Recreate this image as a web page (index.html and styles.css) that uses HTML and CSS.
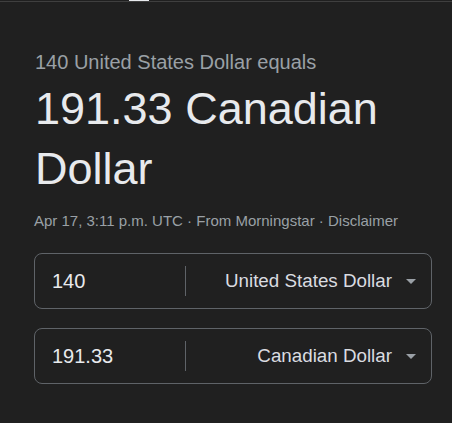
FILE: index.html
```html
<!DOCTYPE html>
<html lang="en">
<head>
    <meta charset="UTF-8">
    <meta name="viewport" content="width=device-width, initial-scale=1.0">
    <title>Currency converter</title>
    <link rel="stylesheet" href="styles.css">
</head>
<body>
    <div class="topbar"><span class="tab-mark"></span></div>

    <main class="card">
        <p class="subtitle">140 United States Dollar equals</p>
        <h1 class="result">191.33 Canadian Dollar</h1>
        <p class="meta">Apr 17, 3:11 p.m. UTC · <span>From Morningstar</span> · <a href="#">Disclaimer</a></p>

        <div class="converter">
            <div class="amount">140</div>
            <div class="divider"></div>
            <div class="unit">
                <span class="unit-name">United States Dollar</span>
                <span class="arrow"></span>
            </div>
        </div>

        <div class="converter">
            <div class="amount">191.33</div>
            <div class="divider"></div>
            <div class="unit">
                <span class="unit-name">Canadian Dollar</span>
                <span class="arrow"></span>
            </div>
        </div>
    </main>
</body>
</html>
```

FILE: styles.css
```css
body{
    margin: 0;
    background-color: #202020;
    font-family: "Liberation Sans", Arial, sans-serif;
    color: #e8eaed;
}

.topbar{
    height: 1px;
    border-bottom: 1px solid #3f3f3f;
}

.tab-mark{
    display: block;
    margin-left: 129px;
    width: 20px;
    height: 1px;
    background-color: #e8eaed;
}

.card{
    padding: 0 20px 40px 34px;
}

.subtitle{
    margin: 48px 0 0 1px;
    font-size: 20px;
    line-height: 24px;
    color: #9aa0a6;
}

.result{
    margin: 5px 0 0 1px;
    font-size: 45px;
    font-weight: normal;
    line-height: 60px;
    color: #e8eaed;
}

.meta{
    margin: 12px 0 0;
    font-size: 15px;
    line-height: 20px;
    color: #9aa0a6;
}

.meta a{
    color: #9aa0a6;
    text-decoration: none;
}

.converter{
    display: flex;
    align-items: center;
    height: 56px;
    box-sizing: border-box;
    margin-top: 22px;
    border: 1px solid #5f6368;
    border-radius: 8px;
}

.converter + .converter{
    margin-top: 19px;
}

.amount{
    width: 150px;
    box-sizing: border-box;
    padding-left: 17px;
    font-size: 20px;
    color: #e8eaed;
}

.divider{
    width: 1px;
    height: 30px;
    background-color: #5f6368;
}

.unit{
    flex: 1;
    display: flex;
    justify-content: flex-end;
    align-items: center;
    gap: 14px;
    padding-right: 15px;
    font-size: 18.8px;
    color: #dadce0;
}

.arrow{
    width: 0;
    height: 0;
    border-left: 5px solid transparent;
    border-right: 5px solid transparent;
    border-top: 5px solid #9aa0a6;
}
```
